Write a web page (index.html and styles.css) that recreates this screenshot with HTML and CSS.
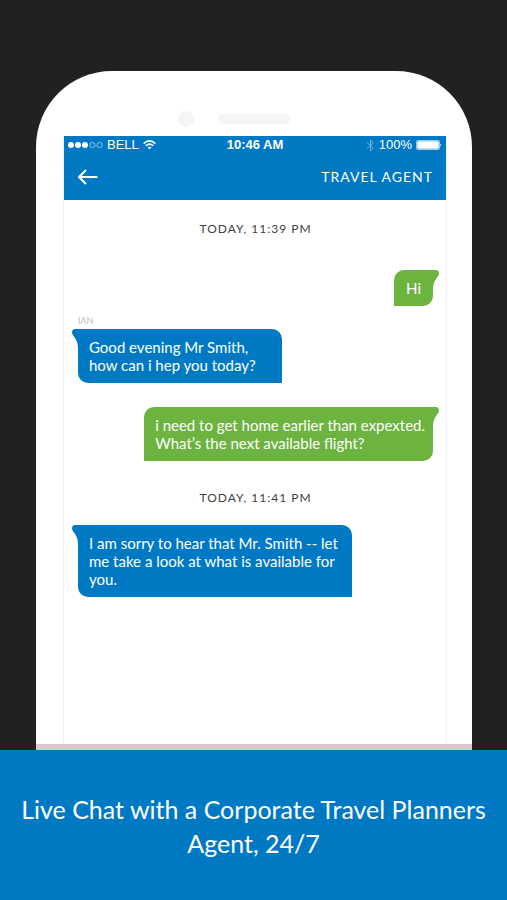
FILE: index.html
```html
<!DOCTYPE html>
<html lang="en">
<head>
<meta charset="utf-8">
<meta name="viewport" content="width=device-width, initial-scale=1">
<title>Live Chat</title>
<link rel="stylesheet" href="styles.css">
</head>
<body>
<main class="stage">
  <div class="phone">
    <div class="speaker"><span class="camera"></span><span class="slot"></span></div>
    <section class="screen">
      <header class="topbar">
        <div class="status">
          <div class="carrier">
            <svg class="signal" width="35" height="8" viewBox="0 0 35 8" aria-hidden="true">
              <circle cx="3" cy="4" r="3"/><circle cx="10" cy="4" r="3"/><circle cx="17" cy="4" r="3"/>
              <circle class="ring" cx="24.500" cy="4" r="2.600"/><circle class="ring" cx="31.500" cy="4" r="2.600"/>
            </svg>
            <span>BELL</span>
            <svg width="13" height="10" viewBox="0 0 13 10" aria-hidden="true">
              <path class="wave" d="M.6 3.600Q6.500-1.800 12.400 3.600M2.700 5.800Q6.500 2.500 10.300 5.800"/>
              <path class="fill" d="M4.500 7.200Q6.500 5.900 8.500 7.200L6.500 9.600Z"/>
            </svg>
          </div>
          <strong class="clock">10:46 AM</strong>
          <div class="power">
            <svg class="bluetooth" width="9" height="13" viewBox="0 0 9 13" aria-hidden="true">
              <path d="M1 3.500 7.500 9.300 4.500 12V1L7.500 3.700 1 9.500"/>
            </svg>
            <span>100%</span>
            <svg width="26" height="10" viewBox="0 0 26 10" aria-hidden="true">
              <rect class="case" x=".5" y=".5" width="23" height="9" rx="1.500"/>
              <rect class="fill" x="1.300" y="1.300" width="21.400" height="7.400" rx="1"/>
              <path class="fill" d="M24.300 3.200Q26 5 24.300 6.800Z"/>
            </svg>
          </div>
        </div>
        <nav class="nav">
          <button class="back" type="button" aria-label="Back">
            <svg width="20" height="16" viewBox="0 0 20 16" aria-hidden="true"><path d="M19.500 8H1M8 1 1 8l7 7"/></svg>
          </button>
          <h1 class="title">TRAVEL AGENT</h1>
        </nav>
      </header>
      <div class="chat">
        <p class="date">TODAY, 11:39 PM</p>
        <p class="bubble sent first">Hi<svg class="tail" width="14" height="20" viewBox="0 0 14 20" aria-hidden="true"><path d="M0 0H11Q14 0 14 4Q13.700 6 11 9Q8 13 8 20H0Z"/></svg></p>
        <p class="sender">IAN</p>
        <p class="bubble received">Good evening Mr Smith,<br>how can i hep you today?<svg class="tail" width="14" height="20" viewBox="0 0 14 20" aria-hidden="true"><path d="M14 0H3Q0 0 0 4Q.3 6 3 9Q6 13 6 20H14Z"/></svg></p>
        <p class="bubble sent reply">i need to get home earlier than expexted.<br>What’s the next available flight?<svg class="tail" width="14" height="20" viewBox="0 0 14 20" aria-hidden="true"><path d="M0 0H11Q14 0 14 4Q13.700 6 11 9Q8 13 8 20H0Z"/></svg></p>
        <p class="date later">TODAY, 11:41 PM</p>
        <p class="bubble received last">I am sorry to hear that Mr. Smith -- let<br>me take a look at what is available for<br>you.<svg class="tail" width="14" height="20" viewBox="0 0 14 20" aria-hidden="true"><path d="M14 0H3Q0 0 0 4Q.3 6 3 9Q6 13 6 20H14Z"/></svg></p>
      </div>
    </section>
  </div>
</main>
<footer class="caption">Live Chat with a Corporate Travel Planners Agent, 24/7</footer>
</body>
</html>
```
FILE: styles.css
```css
* { box-sizing: border-box; }
body {
  margin: 0;
  min-height: 100vh;
  display: flex;
  flex-direction: column;
  background: #232021;
  color: #fff;
  font-family: Lato, sans-serif;
}
p, h1 { margin: 0; }
svg { display: block; flex: none; }

.stage {
  flex: 1;
  display: flex;
  padding: 71px 35px 0 36px;
}
.phone {
  flex: 1;
  display: flex;
  flex-direction: column;
  padding: 0 25px 0 27px;
  background: #fff;
  border-radius: 76px 76px 0 0;
  border-bottom: 6px solid #cfd0cd;
}
.speaker {
  display: flex;
  align-items: center;
  justify-content: center;
  gap: 24px;
  height: 65px;
  padding: 31px 43px 0 0;
}
.camera { width: 16px; height: 16px; border-radius: 50%; background: #f5f5f5; }
.slot { width: 72px; height: 10px; border-radius: 5px; background: #f5f5f5; }

.screen {
  flex: 1;
  border: solid #f1f1f2;
  border-width: 0 1px;
}
.topbar { background: #0079c4; }
.status {
  display: grid;
  grid-template-columns: 1fr auto 1fr;
  align-items: center;
  height: 18px;
  padding: 0 4px;
  font: 13px/18px "Liberation Sans", sans-serif;
}
.carrier, .power { display: flex; align-items: center; gap: 4px; }
.power { justify-content: flex-end; }
.signal, .fill { fill: #fff; }
.ring { fill: none; stroke: #8fc4e6; }
.wave { fill: none; stroke: #fff; stroke-width: 1.5; }
.case { fill: none; stroke: #a5d0eb; }
.bluetooth { fill: none; stroke: #6db2dd; }
.clock { font-weight: 700; }

.nav {
  display: flex;
  align-items: center;
  justify-content: space-between;
  height: 46px;
  padding: 0 13px 0 14px;
}
.back { padding: 0; border: 0; background: none; }
.back svg { fill: none; stroke: #fff; stroke-width: 2; }
.title { font-size: 14px; line-height: 18px; font-weight: 400; letter-spacing: 1px; }

.chat {
  display: flex;
  flex-direction: column;
  padding: 20px 13px 24px 14px;
}
.date {
  align-self: center;
  color: #414042;
  font-size: 12px;
  line-height: 18px;
  letter-spacing: 1px;
}
.bubble {
  position: relative;
  padding: 9px 11px;
  font-size: 15px;
  line-height: 18px;
}
.received {
  align-self: flex-start;
  padding-right: 26px;
  background: #0079c4;
  border-radius: 0 10px 0 10px;
}
.sent {
  align-self: flex-end;
  padding-right: 8px;
  background: #6cb33f;
  border-radius: 10px 0 10px 0;
}
.tail { position: absolute; top: 0; }
.received .tail { left: -6px; fill: #0079c4; }
.sent .tail { right: -6px; fill: #6cb33f; }
.first { margin-top: 32px; padding-right: 12px; padding-left: 12px; }
.sender { margin: 9px 0 2px; color: #bcbec0; font-size: 9px; line-height: 12px; }
.reply { margin-top: 24px; }
.later { margin-top: 28px; }
.last { margin-top: 18px; padding-right: 14px; }

.caption {
  padding: 42px 16px 40px;
  background: #0079c4;
  font-size: 25px;
  line-height: 34px;
  text-align: center;
}
```
